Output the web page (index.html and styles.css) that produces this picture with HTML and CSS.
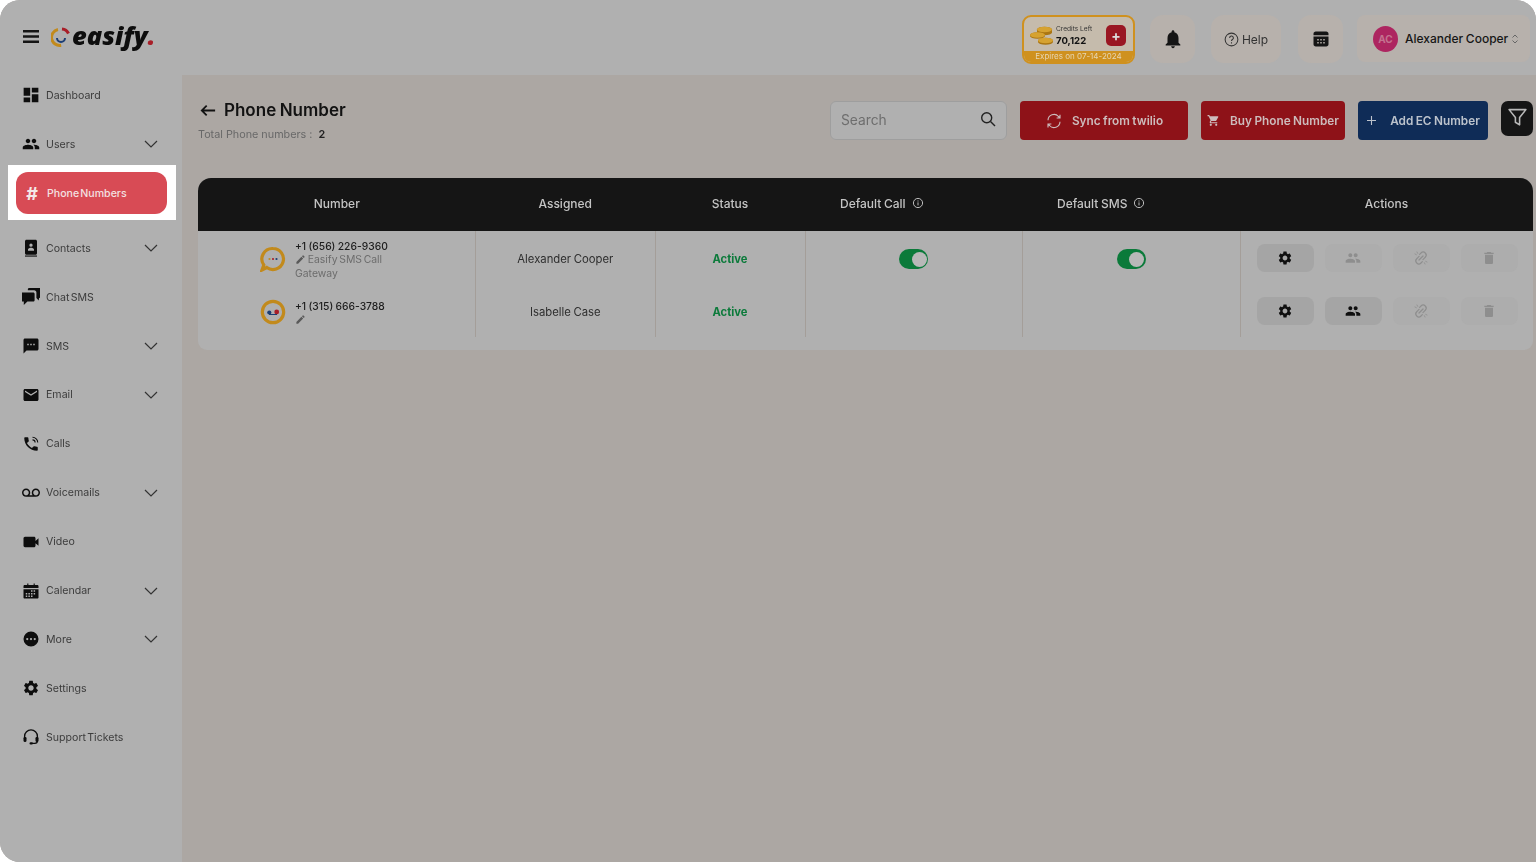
FILE: index.html
```html
<!DOCTYPE html>
<html lang="en">
<head>
<meta charset="utf-8">
<title>Phone Number</title>
<link rel="stylesheet" href="styles.css">
</head>
<body>
<svg class="defs" width="0" height="0" aria-hidden="true">
  <defs>
    <symbol id="i-dash" viewBox="1 1 22 22"><path d="M3 13h8V3H3v10zm0 8h8v-6H3v6zm10 0h8V11h-8v10zm0-18v6h8V3h-8z"/></symbol>
    <symbol id="i-people" viewBox="0 0 24 24"><path d="M16 11c1.66 0 2.99-1.34 2.99-3S17.66 5 16 5c-1.66 0-3 1.34-3 3s1.34 3 3 3zm-8 0c1.66 0 2.99-1.34 2.99-3S9.66 5 8 5C6.34 5 5 6.34 5 8s1.34 3 3 3zm0 2c-2.33 0-7 1.17-7 3.5V19h14v-2.5c0-2.33-4.67-3.5-7-3.5zm8 0c-.29 0-.62.02-.97.05 1.16.84 1.97 1.97 1.97 3.45V19h6v-2.5c0-2.33-4.67-3.5-7-3.5z"/></symbol>
    <symbol id="i-book" viewBox="0 0 24 24"><path fill-rule="evenodd" d="M6 1h12c1.100 0 2 .9 2 2v16c0 1.100-.9 2-2 2H6c-1.100 0-2-.9-2-2V3c0-1.100.9-2 2-2zm6 5a2.200 2.200 0 1 0 0 4.400A2.200 2.200 0 0 0 12 6zm-4 9.500h8v-1.600c0-1.400-2.600-2.300-4-2.300s-4 .9-4 2.300v1.600z"/><path d="M4 22h16v1.500H4z"/></symbol>
    <symbol id="i-chat" viewBox="2 4 20 18"><path d="M10 3h11.500c.8 0 1.500.7 1.500 1.500v8c0 .8-.7 1.500-1.500 1.500H21l-.5 3-2.500-3v-6c0-1.400-1-2.500-2.500-2.500h-7V4.500C8.500 3.700 9.200 3 10 3z"/><path d="M2.500 8h12c.8 0 1.500.7 1.500 1.500v7c0 .8-.7 1.500-1.500 1.500H8l-4 4v-4H2.500C1.700 18 1 17.300 1 16.500v-7C1 8.700 1.700 8 2.500 8z"/></symbol>
    <symbol id="i-sms" viewBox="0 0 24 24"><path d="M20 2H4c-1.100 0-2 .9-2 2v18l4-4h14c1.100 0 2-.9 2-2V4c0-1.100-.9-2-2-2zM9 11H7V9h2v2zm4 0h-2V9h2v2zm4 0h-2V9h2v2z"/></symbol>
    <symbol id="i-mail" viewBox="0 0 24 24"><path d="M20 4H4c-1.100 0-1.990.9-1.990 2L2 18c0 1.100.9 2 2 2h16c1.100 0 2-.9 2-2V6c0-1.100-.9-2-2-2zm0 4l-8 5-8-5V6l8 5 8-5v2z"/></symbol>
    <symbol id="i-call" viewBox="0 0 24 24"><path d="M6.620 10.790c1.440 2.830 3.760 5.140 6.590 6.590l2.200-2.200c.27-.27.67-.36 1.020-.24 1.120.37 2.330.57 3.570.57.55 0 1 .45 1 1V20c0 .55-.45 1-1 1-9.390 0-17-7.610-17-17 0-.55.45-1 1-1h3.500c.55 0 1 .45 1 1 0 1.250.2 2.450.57 3.570.11.35.03.74-.25 1.020l-2.200 2.200z"/><path d="M14 3a7 7 0 0 1 7 7M14 6.500a3.500 3.500 0 0 1 3.500 3.500" fill="none" stroke="currentColor" stroke-width="1.400"/></symbol>
    <symbol id="i-vm" viewBox="0 0 24 24"><path d="M18.500 6C15.460 6 13 8.460 13 11.500c0 1.330.47 2.550 1.260 3.500H9.740c.79-.95 1.260-2.170 1.260-3.500C11 8.460 8.540 6 5.500 6S0 8.460 0 11.500 2.460 17 5.500 17h13c3.040 0 5.500-2.460 5.500-5.500S21.540 6 18.500 6zm-13 9C3.570 15 2 13.430 2 11.500S3.570 8 5.500 8 9 9.570 9 11.500 7.430 15 5.500 15zm13 0c-1.930 0-3.500-1.570-3.500-3.500S16.570 8 18.500 8 22 9.570 22 11.500 20.430 15 18.500 15z"/></symbol>
    <symbol id="i-video" viewBox="0 0 24 24"><path d="M18 10.500V7c0-1.100-.9-2-2-2H4C3 5 2 6 2 7v10c0 1 1 2 2 2h12c1.100 0 2-.9 2-2v-3.500l4 3.500V7l-4 3.500z"/></symbol>
    <symbol id="i-cal" viewBox="0 0 24 24"><path fill-rule="evenodd" d="M3.500 4H7V2h1.500v2h7V2H17v2h3.500C21.300 4 22 4.700 22 5.500V8H2V5.500C2 4.700 2.700 4 3.500 4zM2 9.500h20v11c0 .8-.7 1.500-1.500 1.500h-17C2.700 22 2 21.300 2 20.500v-11zM12 11v2h2v-2h-2zm3.500 0v2h2v-2h-2zm-7 3.500v2h2v-2h-2zm-3.500 0v2h2v-2H5zm7 0v2h2v-2h-2zm3.500 0v2h2v-2h-2zM5 18v2h2v-2H5zm3.500 0v2h2v-2h-2zm3.500 0v2h2v-2h-2z"/></symbol>
    <symbol id="i-more" viewBox="0 0 24 24"><path fill-rule="evenodd" d="M12 2a10 10 0 1 0 0 20 10 10 0 0 0 0-20zM7 10.500a1.500 1.500 0 1 1 0 3 1.500 1.500 0 0 1 0-3zm5 0a1.500 1.500 0 1 1 0 3 1.500 1.500 0 0 1 0-3zm5 0a1.500 1.500 0 1 1 0 3 1.500 1.500 0 0 1 0-3z"/></symbol>
    <symbol id="i-gear" viewBox="0 0 24 24"><path d="M19.140 12.940c.04-.3.06-.61.06-.94 0-.32-.02-.64-.07-.94l2.030-1.580c.18-.14.23-.41.12-.61l-1.920-3.320c-.12-.22-.37-.29-.59-.22l-2.390.96c-.5-.38-1.030-.7-1.620-.94l-.36-2.540c-.04-.24-.24-.41-.48-.41h-3.840c-.24 0-.43.17-.47.41l-.36 2.540c-.59.24-1.130.57-1.620.94l-2.390-.96c-.22-.08-.47 0-.59.22L2.740 8.870c-.12.21-.08.47.12.61l2.030 1.580c-.05.3-.09.63-.09.94s.02.64.07.94l-2.030 1.580c-.18.14-.23.41-.12.61l1.920 3.320c.12.22.37.29.59.22l2.390-.96c.5.38 1.030.7 1.620.94l.36 2.540c.05.24.24.41.48.41h3.840c.24 0 .44-.17.47-.41l.36-2.540c.59-.24 1.130-.56 1.620-.94l2.390.96c.22.08.47 0 .59-.22l1.920-3.320c.12-.22.07-.47-.12-.61l-2.010-1.580zM12 15.600c-1.980 0-3.600-1.620-3.600-3.600s1.620-3.600 3.600-3.600 3.600 1.620 3.600 3.600-1.620 3.600-3.600 3.600z"/></symbol>
    <symbol id="i-headset" viewBox="0 0 24 24"><path d="M3.500 15v-4a8.500 8.500 0 0 1 17 0v4M20.500 15v2a3.500 3.500 0 0 1-3.500 3.500h-4" fill="none" stroke="currentColor" stroke-width="1.800"/><rect x="2" y="12" width="4" height="6.500" rx="1.500"/><rect x="18" y="12" width="4" height="6.500" rx="1.500"/><rect x="10" y="19" width="4.500" height="3" rx="1.500"/></symbol>
    <symbol id="i-chev" viewBox="0 0 14 8"><path d="M1 1l6 6 6-6" fill="none" stroke="currentColor" stroke-width="1.200"/></symbol>
    <symbol id="i-edit" viewBox="0 0 24 24"><path d="M3 17.250V21h3.750L17.810 9.940l-3.750-3.750L3 17.250zM20.710 7.040c.39-.39.39-1.020 0-1.410l-2.340-2.340c-.39-.39-1.020-.39-1.410 0l-1.830 1.830 3.750 3.750 1.830-1.830z"/></symbol>
    <symbol id="i-trash" viewBox="0 0 24 24"><path d="M6 19c0 1.100.9 2 2 2h8c1.100 0 2-.9 2-2V7H6v12zM19 4h-3.500l-1-1h-5l-1 1H5v2h14V4z"/></symbol>
    <symbol id="i-link" viewBox="0 0 24 24"><g fill="none" stroke="currentColor" stroke-width="1.800" stroke-linecap="round"><path d="M10 6.500l2-2a4.500 4.500 0 0 1 6.400 6.400l-2 2-1.500 1.500"/><path d="M14 17.500l-2 2a4.500 4.500 0 0 1-6.400-6.400l2-2 1.500-1.500"/><path d="M9 15l6-6"/><path d="M6 3l1 2M3 6l2 1M18 21l-1-2M21 18l-2-1" stroke-width="1.200"/></g></symbol>
    <symbol id="i-info" viewBox="0 0 12 12"><circle cx="6" cy="6" r="4.600" fill="none" stroke="currentColor" stroke-width="1"/><path d="M6 5.400v3M6 3.500v1" fill="none" stroke="currentColor" stroke-width="1"/></symbol>
  </defs>
</svg>

<div class="app">
  <header class="top">
    <div class="brand">
      <svg class="burger" viewBox="0 0 16 13"><path d="M0 0h16v2.400H0zM0 5.300h16v2.400H0zM0 10.600h16V13H0z"/></svg>
      <svg class="ring" viewBox="0 0 20 20" stroke-width="3">
        <path d="M9 2a8 8 0 0 0-1 16" stroke="#c28a1c" transform="rotate(-15 10 10)"/>
        <path d="M11 2a8 8 0 0 1 6.500 4.500" stroke="#a81e28"/>
        <path d="M6 11a4 4 0 0 0 8 0" stroke="#1c3e74" stroke-width="2"/>
      </svg>
      <span class="wordmark">easify<span class="wordmark-dot">.</span></span>
    </div>
    <div class="top-actions">
      <div class="credits">
        <div class="credits-main">
          <svg class="coins" viewBox="0 0 24 20">
            <path d="M7 3.500a7.500 2.800 0 0 1 15 0v3a7.500 2.800 0 0 1-15 0z" fill="#ab7612"/>
            <ellipse cx="14.500" cy="3.500" rx="7.500" ry="2.800" fill="#d6a230"/>
            <path d="M0 9a7.500 2.800 0 0 1 15 0v1a7.500 2.800 0 0 1-15 0z" fill="#ab7612"/>
            <ellipse cx="7.500" cy="9" rx="7.500" ry="2.800" fill="#d6a230"/>
            <path d="M8 14.500a7.500 2.800 0 0 1 15 0v1.500a7.500 2.800 0 0 1-15 0z" fill="#ab7612"/>
            <ellipse cx="15.500" cy="14.500" rx="7.500" ry="2.800" fill="#d6a230"/>
          </svg>
          <div class="credits-text">
            <span class="credits-label">Credits Left</span>
            <strong class="credits-value">70,122</strong>
          </div>
          <span class="credits-add">+</span>
        </div>
        <div class="credits-exp">Expires on 07-14-2024</div>
      </div>
      <button class="tile tile-bell"><svg class="i-20" viewBox="0 0 24 24"><path d="M12 22c1.100 0 2-.9 2-2h-4c0 1.100.9 2 2 2zm6-6v-5c0-3.070-1.640-5.640-4.500-6.320V4c0-.83-.67-1.500-1.500-1.500s-1.500.67-1.500 1.500v.68C7.630 5.360 6 7.920 6 11v5l-2 2v1h16v-1l-2-2z"/></svg></button>
      <button class="tile tile-help">
        <svg class="i-15 line" viewBox="0 0 16 16" stroke="currentColor" stroke-width="1.100"><circle cx="8" cy="8" r="6.800"/><path d="M6 6.300a2 2 0 1 1 3 1.700c-.7.4-1 .8-1 1.500M8 11v1.200"/></svg>
        <span>Help</span>
      </button>
      <button class="tile tile-cal"><svg class="i-18" viewBox="0 0 24 24"><path fill-rule="evenodd" d="M5 2h14c1.700 0 3 1.300 3 3v14c0 1.700-1.300 3-3 3H5c-1.700 0-3-1.300-3-3V5c0-1.700 1.300-3 3-3zM2 7v1.500h20V7H2zm5 5v2h2v-2H7zm4 0v2h2v-2h-2zm4 0v2h2v-2h-2zm-8 4v2h2v-2H7zm4 0v2h2v-2h-2zm4 0v2h2v-2h-2z"/></svg></button>
      <div class="user">
        <span class="avatar">AC</span>
        <span class="user-name">Alexander Cooper</span>
        <svg class="updown line" viewBox="0 0 8 12" stroke="currentColor"><path d="M1.500 4.500L4 2l2.500 2.500M1.500 7.500L4 10l2.500-2.500"/></svg>
      </div>
    </div>
  </header>

  <nav class="side">
    <a class="nav"><svg class="nav-i"><use href="#i-dash"/></svg><span>Dashboard</span></a>
    <a class="nav"><svg class="nav-i"><use href="#i-people"/></svg><span>Users</span><svg class="chev"><use href="#i-chev"/></svg></a>
    <div class="spot"><a class="nav nav-on"><span class="hash">#</span><span>Phone Numbers</span></a></div>
    <a class="nav"><svg class="nav-i"><use href="#i-book"/></svg><span>Contacts</span><svg class="chev"><use href="#i-chev"/></svg></a>
    <a class="nav"><svg class="nav-i"><use href="#i-chat"/></svg><span>Chat SMS</span></a>
    <a class="nav"><svg class="nav-i"><use href="#i-sms"/></svg><span>SMS</span><svg class="chev"><use href="#i-chev"/></svg></a>
    <a class="nav"><svg class="nav-i"><use href="#i-mail"/></svg><span>Email</span><svg class="chev"><use href="#i-chev"/></svg></a>
    <a class="nav"><svg class="nav-i"><use href="#i-call"/></svg><span>Calls</span></a>
    <a class="nav"><svg class="nav-i"><use href="#i-vm"/></svg><span>Voicemails</span><svg class="chev"><use href="#i-chev"/></svg></a>
    <a class="nav"><svg class="nav-i"><use href="#i-video"/></svg><span>Video</span></a>
    <a class="nav"><svg class="nav-i"><use href="#i-cal"/></svg><span>Calendar</span><svg class="chev"><use href="#i-chev"/></svg></a>
    <a class="nav"><svg class="nav-i"><use href="#i-more"/></svg><span>More</span><svg class="chev"><use href="#i-chev"/></svg></a>
    <a class="nav"><svg class="nav-i"><use href="#i-gear"/></svg><span>Settings</span></a>
    <a class="nav"><svg class="nav-i"><use href="#i-headset"/></svg><span>Support Tickets</span></a>
  </nav>

  <main class="main">
    <div class="toolbar">
      <div class="heading">
        <h1 class="title">
          <svg class="back line" viewBox="0 0 18 14" stroke="currentColor" stroke-width="2"><path d="M17 7H2M7.500 1.500L2 7l5.500 5.500"/></svg>
          Phone Number
        </h1>
        <p class="total">Total Phone numbers : <b>2</b></p>
      </div>
      <div class="search">
        <span class="search-ph">Search</span>
        <svg class="search-i line" viewBox="0 0 16 16" stroke="currentColor" stroke-width="1.400"><circle cx="6.700" cy="6.700" r="5"/><path d="M10.500 10.500L15 15"/></svg>
      </div>
      <button class="btn btn-red btn-sync">
        <svg class="i-18 line" viewBox="0 0 24 24" stroke="currentColor" stroke-width="1.500"><path d="M4 11a8 8 0 0 1 14-5l2 2M20 3.500V8h-4.500M20 13a8 8 0 0 1-14 5l-2-2M4 20.500V16h4.500"/></svg>
        <span>Sync from twilio</span>
      </button>
      <button class="btn btn-red btn-buy">
        <svg class="i-13" viewBox="0 0 24 24"><path d="M7 18c-1.100 0-1.990.9-1.990 2S5.900 22 7 22s2-.9 2-2-.9-2-2-2zM1 2v2h2l3.600 7.590-1.350 2.450c-.16.28-.25.61-.25.96 0 1.100.9 2 2 2h12v-2H7.420c-.14 0-.25-.11-.25-.25l.03-.12.9-1.630h7.450c.75 0 1.410-.41 1.750-1.030l3.580-6.490c.08-.14.12-.31.12-.48 0-.55-.45-1-1-1H5.210l-.94-2H1zm16 16c-1.100 0-1.990.9-1.990 2s.89 2 1.990 2 2-.9 2-2-.9-2-2-2z"/></svg>
        <span>Buy Phone Number</span>
      </button>
      <button class="btn btn-blue btn-add">
        <svg class="i-11 line" viewBox="0 0 11 11" stroke="currentColor" stroke-width="1.100"><path d="M5.500 1v9M1 5.500h9"/></svg>
        <span>Add EC Number</span>
      </button>
      <button class="btn-filter">
        <svg class="i-filter line" viewBox="0 0 20 20" stroke="currentColor" stroke-width="1.500"><path d="M2 2.500h16L12 10v7l-4-2.500V10L2 2.500z" stroke-linejoin="round"/></svg>
      </button>
    </div>

    <div class="table-card">
      <table class="grid">
        <colgroup>
          <col class="c-num"><col class="c-asg"><col class="c-sta"><col class="c-call"><col class="c-sms"><col class="c-act">
        </colgroup>
        <thead>
          <tr>
            <th>Number</th>
            <th>Assigned</th>
            <th>Status</th>
            <th class="th-left"><span class="th-wrap">Default Call<svg class="info"><use href="#i-info"/></svg></span></th>
            <th class="th-left"><span class="th-wrap">Default SMS<svg class="info"><use href="#i-info"/></svg></span></th>
            <th>Actions</th>
          </tr>
        </thead>
        <tbody>
          <tr class="row-a">
            <td>
              <div class="num">
                <svg class="num-i" viewBox="0 0 26 26">
                  <path d="M13 2.500a10.500 10.500 0 1 1-6.200 19L2 24l1.800-5A10.500 10.500 0 0 1 13 2.500z" fill="none" stroke="#c28a1c" stroke-width="3.200"/>
                  <circle cx="9.500" cy="13" r="1.100" fill="#c28a1c"/><circle cx="13" cy="13" r="1.100" fill="#a81e28"/><circle cx="16.500" cy="13" r="1.100" fill="#1c3e74"/>
                </svg>
                <div class="num-text">
                  <div class="num-val">+1 (656) 226-9360</div>
                  <div class="num-note"><svg class="edit"><use href="#i-edit"/></svg> Easify SMS Call Gateway</div>
                </div>
              </div>
            </td>
            <td>Alexander Cooper</td>
            <td class="active">Active</td>
            <td class="cen"><span class="toggle"><span class="knob"></span></span></td>
            <td class="cen"><span class="toggle"><span class="knob"></span></span></td>
            <td>
              <div class="acts">
                <span class="act act-on"><svg class="act-i"><use href="#i-gear"/></svg></span>
                <span class="act act-wide act-off"><svg class="act-i"><use href="#i-people"/></svg></span>
                <span class="act act-off"><svg class="act-i"><use href="#i-link"/></svg></span>
                <span class="act act-off"><svg class="act-i"><use href="#i-trash"/></svg></span>
              </div>
            </td>
          </tr>
          <tr class="row-b">
            <td>
              <div class="num">
                <svg class="num-i" viewBox="0 0 26 26">
                  <circle cx="13" cy="13" r="10.700" fill="none" stroke="#c28a1c" stroke-width="3.200"/>
                  <circle cx="9.300" cy="13.500" r="2.100" fill="#1c3e74"/><circle cx="16.700" cy="13" r="2.400" fill="#a81e28"/><path d="M9 15h8v.9H9z" fill="#1c3e74"/>
                </svg>
                <div class="num-text">
                  <div class="num-val">+1 (315) 666-3788</div>
                  <div class="num-note"><svg class="edit"><use href="#i-edit"/></svg></div>
                </div>
              </div>
            </td>
            <td>Isabelle Case</td>
            <td class="active">Active</td>
            <td></td>
            <td></td>
            <td>
              <div class="acts">
                <span class="act act-on"><svg class="act-i"><use href="#i-gear"/></svg></span>
                <span class="act act-wide act-on"><svg class="act-i"><use href="#i-people"/></svg></span>
                <span class="act act-off"><svg class="act-i"><use href="#i-link"/></svg></span>
                <span class="act act-off"><svg class="act-i"><use href="#i-trash"/></svg></span>
              </div>
            </td>
          </tr>
        </tbody>
      </table>
    </div>
  </main>
</div>
</body>
</html>
```

FILE: styles.css
```css
* { box-sizing: border-box; }
html, body { margin: 0; padding: 0; height: 100%; background: #fff; overflow: hidden; }
body { font-family: "Inter", "Liberation Sans", sans-serif; color: #111; }
.defs { display: block; height: 0; }
svg { fill: currentColor; flex: none; }
svg.line { fill: none; }

.app {
  width: 1536px;
  height: 862px;
  display: grid;
  grid-template-columns: 182px 1fr;
  grid-template-rows: 75px 1fr;
  background: #aca7a3;
  border-radius: 20px 20px 0 20px;
  overflow: hidden;
  filter: blur(0.45px);
}

.top {
  grid-column: 1 / 3;
  background: #b0b0b0;
  display: flex;
  align-items: flex-start;
  justify-content: space-between;
}
.brand { display: flex; align-items: center; padding: 20px 0 0 23px; }
.burger { width: 16px; height: 13px; color: #141414; margin-top: 3px; }
.ring { width: 20px; height: 20px; margin: 4px 1px 0 12px; fill: none; }
.wordmark { font: italic 800 25.500px/30px "Open Sans", sans-serif; color: #0d0d0d; }
.wordmark-dot { color: #a81e28; }

.top-actions { display: flex; padding: 15px 6px 0 0; align-items: flex-start; }
.credits {
  width: 113px; height: 49px; border: 2px solid #cf911f; border-radius: 9px;
  background: #c5bbac; overflow: hidden; display: flex; flex-direction: column;
}
.credits-main { flex: 1; display: flex; align-items: center; padding: 3px 7px 0 6px; }
.coins { width: 24px; height: 20px; }
.credits-text { display: flex; flex-direction: column; margin-left: 2px; flex: 1; }
.credits-label { font-size: 6.600px; line-height: 10px; color: #333; }
.credits-value { font-size: 9.600px; line-height: 13px; font-weight: 700; color: #111; }
.credits-add {
  width: 20px; height: 21px; background: #9a1722; border-radius: 5px; color: #ddd;
  display: flex; align-items: center; justify-content: center; font-size: 14px; font-weight: 700;
}
.credits-exp { height: 11px; background: #cf911f; color: #e6d6b4; font-size: 8px; line-height: 11px; text-align: center; }

.tile {
  height: 48px; border: 0; border-radius: 13px; background: #b7b1ac; color: #151515;
  display: flex; align-items: center; justify-content: center; padding: 0; font: inherit;
}
.tile-bell { width: 45px; margin-left: 15px; }
.tile-help { width: 70px; margin-left: 16px; gap: 3px; font-size: 12px; color: #333; }
.tile-cal { width: 45px; margin-left: 17px; }
.i-20 { width: 22px; height: 22px; }
.i-18 { width: 18px; height: 18px; }
.i-15 { width: 15px; height: 15px; }
.i-13 { width: 13px; height: 13px; }
.i-11 { width: 11px; height: 11px; }
.i-filter { width: 21px; height: 21px; margin-bottom: 3px; }

.user {
  width: 173px; height: 47px; margin-left: 14px; border-radius: 8px; background: #b7b1ac;
  display: flex; align-items: center; padding: 0 0 0 16px; font-size: 12px; font-weight: 500; color: #161616; word-spacing: -0.500px;
}
.avatar {
  width: 25px; height: 26px; border-radius: 50%; background: #ad2560; color: #c4718f;
  display: flex; align-items: center; justify-content: center; font-size: 10px; font-weight: 700; margin-right: 7px;
}
.user-name { white-space: nowrap; margin-bottom: 1px; }
.updown { width: 8px; height: 12px; color: #666; margin-left: 3px; }

.side { background: #b0b0b0; display: flex; flex-direction: column; gap: 8.900px; padding-top: 0.400px; }
.nav {
  height: 40px; display: flex; align-items: center; padding: 0 24px 0 22px; font-size: 10.600px; word-spacing: -1.700px; color: #3c3c3c; white-space: nowrap;
}
.nav-i { width: 18px; height: 18px; color: #0d0d0d; margin-right: 6px; overflow: visible; }
.chev { width: 14px; height: 8px; margin-left: auto; color: #333; }
.spot { margin: -8.200px 6px -0.600px 8px; padding: 7px 9px 6px 8px; background: #fff; }
.nav-on { height: 42px; padding: 1px 0 0 7px; background: #d84b55; border-radius: 12px; color: #f3e0e1; font-weight: 500; }
.hash { width: 18px; margin-right: 6px; text-align: center; font-size: 18px; font-weight: 700; color: #f3e8e8; }

.main { padding: 26px 3px 0 16px; min-width: 0; }
.toolbar { display: flex; align-items: flex-start; height: 77px; }
.heading { flex: 1; }
.title { margin: -1px 0 0; display: flex; align-items: center; gap: 8px; font-size: 17px; line-height: 20px; font-weight: 600; word-spacing: -0.800px; color: #121212; padding: 0 0 0 2px; }
.back { width: 16px; height: 13px; }
.total { margin: 8px 0 0; font-size: 10.800px; line-height: 14px; color: #686868; }
.total b { margin-left: 3px; font-weight: 600; color: #222; }

.search {
  width: 177px; height: 39px; margin-right: 13px; border: 1px solid #9e9e9e; border-radius: 6px; background: #b0b0b0;
  display: flex; align-items: center; justify-content: space-between; padding: 0 10px 1px; font-size: 13.800px; color: #6e6e6e;
}
.search-i { width: 16px; height: 16px; color: #222; margin-bottom: 3px; }

.btn {
  height: 39px; margin-right: 13px; border: 0; border-radius: 4px; display: flex; align-items: center; justify-content: center;
  font: 600 11.800px "Inter", sans-serif; word-spacing: -0.500px; color: #cdbcbc; padding: 0; white-space: nowrap;
}
.btn-red { background: #8e1218; }
.btn-blue { background: #0f2c57; color: #bcc3cc; }
.btn-sync { width: 168px; gap: 9px; }
.btn-buy { width: 144px; gap: 10px; }
.btn-add { width: 130px; gap: 13px; }
.btn-filter {
  width: 32px; height: 35px; border: 0; border-radius: 7px; background: #151515; color: #b8b8b8;
  display: flex; align-items: center; justify-content: center; padding: 0;
}

.table-card { background: #b0b0b0; border-radius: 13px 13px 9px 9px; overflow: hidden; padding-bottom: 13px; }
.grid { width: 100%; table-layout: fixed; border-collapse: collapse; font-size: 11.300px; word-spacing: -0.600px; color: #2e2e2e; }
.c-num { width: 277.500px; }
.c-asg { width: 179.500px; }
.c-sta { width: 150px; }
.c-call { width: 217px; }
.c-sms { width: 218px; }
.grid th { height: 53px; background: #151515; color: #c4c4c4; font-weight: 500; font-size: 12px; padding: 0 0 2px; text-align: center; }
.grid .th-left { text-align: left; padding-left: 35px; }
.th-wrap { display: inline-flex; align-items: center; gap: 6px; }
.info { width: 12px; height: 12px; color: #bcbcbc; margin-bottom: 1px; }
.grid td { padding: 0; text-align: center; border-right: 1px solid #a49e99; vertical-align: middle; }
.grid td:last-child { border-right: 0; }
.row-a { height: 56px; }
.row-b { height: 50px; }
.grid .active { color: #0b7a3a; font-weight: 700; font-size: 11.200px; }

.num { display: flex; align-items: center; padding-left: 62px; text-align: left; }
.num-i { width: 26px; height: 26px; margin-right: 9px; fill: none; }
.num-text { width: 100px; padding-top: 2px; }
.num-val { font-size: 10.300px; line-height: 14px; font-weight: 500; word-spacing: -0.400px; color: #1d1d1d; white-space: nowrap; }
.num-note { font-size: 10.400px; line-height: 14px; word-spacing: -1.200px; color: #6c6c6c; }
.edit { width: 11px; height: 11px; color: #5a5a5a; vertical-align: -2px; }

.toggle { display: inline-flex; justify-content: flex-end; align-items: center; width: 29px; height: 20px; border-radius: 10px; background: #0b7a3a; padding: 0 1.500px; vertical-align: middle; }
.knob { width: 15px; height: 15px; border-radius: 50%; background: #b8b8b8; }

.acts { display: flex; align-items: center; padding-left: 16px; gap: 11px; margin-top: -2px; }
.act { width: 57px; height: 28px; border-radius: 8px; display: flex; align-items: center; justify-content: center; }
.act-i { width: 16px; height: 16px; }
.act-on { background: #a5a5a5; color: #0f0f0f; }
.act-off { background: #adadad; color: #8e8e8e; }
```
